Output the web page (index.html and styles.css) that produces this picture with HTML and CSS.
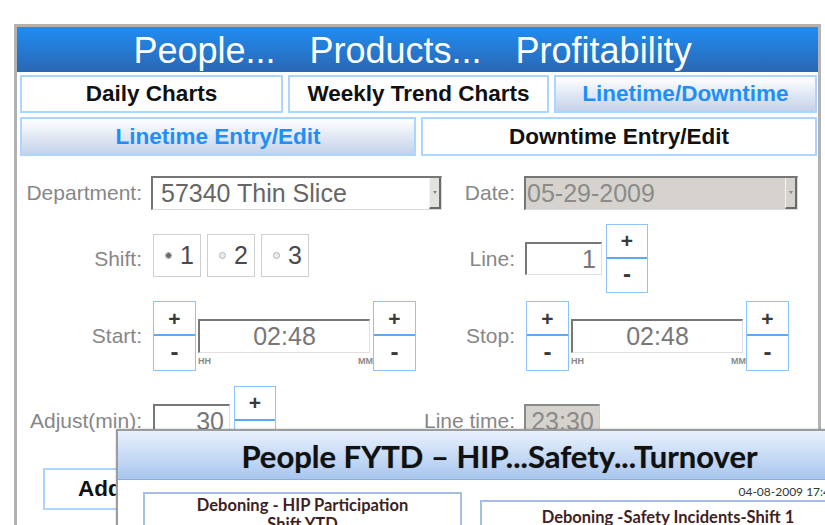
FILE: index.html
```html
<!DOCTYPE html>
<html>
<head>
<meta charset="utf-8">
<title>Linetime Entry/Edit</title>
<link rel="stylesheet" href="styles.css">
</head>
<body>
<div class="frame">
  <div class="header"><span>People...</span><span>Products...</span><span>Profitability</span></div>
  <div class="tabs tabs3">
    <div class="tab">Daily Charts</div>
    <div class="tab">Weekly Trend Charts</div>
    <div class="tab active">Linetime/Downtime</div>
  </div>
  <div class="tabs tabs2">
    <div class="tab active">Linetime Entry/Edit</div>
    <div class="tab">Downtime Entry/Edit</div>
  </div>

  <div class="row row-dept">
    <div class="lbl">Department:</div>
    <div class="select"><span class="val">57340 Thin Slice</span><span class="drop"><span class="arrow"></span></span></div>
    <div class="lbl">Date:</div>
    <div class="select date disabled"><span class="val">05-29-2009</span><span class="drop"><span class="arrow"></span></span></div>
  </div>

  <div class="row row-shift">
    <div class="lbl">Shift:</div>
    <div class="shifts">
      <div class="shiftbox"><span class="radio on"></span><span>1</span></div>
      <div class="shiftbox"><span class="radio"></span><span>2</span></div>
      <div class="shiftbox"><span class="radio"></span><span>3</span></div>
    </div>
    <div class="lbl">Line:</div>
    <div class="spin">
      <div class="num">1</div>
      <div class="pm"><div class="plus">+</div><div class="minus">-</div></div>
    </div>
  </div>

  <div class="row row-time">
    <div class="lbl">Start:</div>
    <div class="timegrp">
      <div class="pm tall"><div class="plus">+</div><div class="minus">-</div></div>
      <div class="tmid">
        <div class="tinput">02:48</div>
        <div class="tlabels"><span>HH</span><span>MM</span></div>
      </div>
      <div class="pm tall"><div class="plus">+</div><div class="minus">-</div></div>
    </div>
    <div class="lbl">Stop:</div>
    <div class="timegrp stop">
      <div class="pm tall"><div class="plus">+</div><div class="minus">-</div></div>
      <div class="tmid">
        <div class="tinput">02:48</div>
        <div class="tlabels"><span>HH</span><span>MM</span></div>
      </div>
      <div class="pm tall"><div class="plus">+</div><div class="minus">-</div></div>
    </div>
  </div>

  <div class="row row-adjust">
    <div class="lbl">Adjust(min):</div>
    <div class="spin adj">
      <div class="num">30</div>
      <div class="pm"><div class="plus">+</div><div class="minus">-</div></div>
    </div>
    <div class="lbl">Line time:</div>
    <div class="num gray">23:30</div>
  </div>

  <div class="actions">
    <div class="addbtn">Add Line</div>
  </div>
</div>

<div class="overlay">
  <div class="ov-title">People FYTD – HIP...Safety...Turnover</div>
  <div class="ov-body">
    <div class="chart c1">
      <div class="ctitle">Deboning - HIP Participation</div>
      <div class="ctitle">Shift YTD</div>
    </div>
    <div class="col2">
      <div class="stamp">04-08-2009 17:45</div>
      <div class="chart c2">
        <div class="ctitle">Deboning -Safety Incidents-Shift 1</div>
      </div>
    </div>
  </div>
</div>
</body>
</html>
```

FILE: styles.css
```css
* { box-sizing: border-box; }
html, body { margin: 0; padding: 0; }
body {
  width: 825px;
  height: 525px;
  overflow: hidden;
  background: #fff;
  font-family: "Liberation Sans", Arial, sans-serif;
  position: relative;
}

.frame {
  margin: 24px 0 0 14px;
  width: 807px;
  height: 520px;
  border: 3px solid #b2b2b2;
  border-bottom: none;
}

.header {
  height: 45px;
  background: linear-gradient(#1f8df2, #2a67b4);
  color: #fff;
  font-size: 36px;
  line-height: 1;
  display: flex;
  justify-content: center;
  align-items: center;
  gap: 34px;
  padding-right: 10px;
  padding-top: 2px;
}

.tabs { display: grid; column-gap: 5px; padding: 0 1px 0 3px; }
.tabs3 { grid-template-columns: 263px 261px 263px; margin-top: 3px; }
.tabs2 { grid-template-columns: 396px 396px; margin-top: 4px; }
.tab {
  height: 38px;
  border: 2px solid #acd5ff;
  background: #fff;
  color: #111;
  font-weight: bold;
  font-size: 22.5px;
  display: flex;
  align-items: center;
  justify-content: center;
}
.tabs2 .tab { height: 39px; }
.tab.active {
  color: #1e8ff7;
  background: linear-gradient(#ffffff, #c4d2ea);
}

.row {
  display: grid;
  grid-template-columns: 134px 290px 83px 1fr;
  align-items: center;
}
.lbl {
  display: flex;
  justify-content: flex-end;
  white-space: nowrap;
  padding-right: 9px;
  font-size: 21px;
  color: #878787;
}

.row-dept { margin-top: 20px; height: 34px; }
.select {
  width: 291px;
  height: 34px;
  display: flex;
  border-top: 2px solid #767676;
  border-left: 2px solid #767676;
  border-bottom: 1px solid #dcdcdc;
  border-right: 1px solid #dcdcdc;
  background: #fff;
}
.select .val {
  flex: 1;
  font-size: 25px;
  line-height: 30px;
  color: #666;
  padding-left: 8px;
}
.select .drop {
  width: 12px;
  background: #e4e2dd;
  border-right: 2px solid #6a6a6a;
  border-bottom: 2px solid #6a6a6a;
  border-left: 1px solid #f4f4f4;
  display: flex;
  align-items: center;
  justify-content: center;
}
.arrow {
  width: 0;
  height: 0;
  border-left: 2px solid transparent;
  border-right: 2px solid transparent;
  border-top: 3px solid #888;
}
.select.date { width: 274px; background: #d6d3ce; }
.select.date .val { color: #8b8b8b; padding-left: 1px; }
.select.date .drop { background: #d6d3ce; }

.row-shift { margin-top: 14px; height: 69px; }
.shifts { display: flex; gap: 6px; padding-left: 2px; align-self: start; margin-top: 10px; }
.shiftbox {
  width: 48px;
  height: 43px;
  border: 1px solid #cfcfcf;
  display: flex;
  align-items: center;
  gap: 8px;
  padding-left: 11px;
  font-size: 25px;
  color: #4a4a4a;
}
.radio {
  width: 7px;
  height: 7px;
  border-radius: 50%;
  border: 1px solid #b5b5b5;
  background: #ececec;
}
.radio.on { background: radial-gradient(circle, #666 0 2px, #ddd 2.5px); border-color: #999; }

.spin { display: flex; align-items: center; gap: 4px; padding-left: 1px; }
.num {
  width: 77px;
  height: 33px;
  border-top: 2px solid #777;
  border-left: 2px solid #777;
  border-bottom: 1px solid #e0e0e0;
  border-right: 1px solid #e0e0e0;
  text-align: right;
  padding-right: 5px;
  font-size: 25px;
  line-height: 30px;
  color: #777;
}
.num.gray { width: 76px; background: #d6d3ce; border-color: #8a8a8a #ccc #ccc #8a8a8a; color: #8b8b8b; text-align: center; padding: 0; }

.pm {
  width: 42px;
  height: 69px;
  border: 1px solid #8cc3fb;
  display: flex;
  flex-direction: column;
  background: #fff;
}
.pm .plus, .pm .minus {
  flex: 1;
  display: flex;
  align-items: center;
  justify-content: center;
  font-size: 21px;
  font-weight: bold;
  color: #3a3a3a;
}
.pm .plus { border-bottom: 2px solid #5fa9f3; padding-top: 1px; }
.pm .minus { font-size: 24px; padding-bottom: 3px; }
.pm.tall { width: 43px; height: 70px; }

.row-time { margin-top: 7px; height: 72px; }
.timegrp { display: flex; padding-left: 2px; }
.tmid { width: 177px; padding-left: 2px; padding-right: 3px; padding-top: 18px; }
.tinput {
  width: 172px;
  height: 34px;
  border-top: 2px solid #777;
  border-left: 2px solid #777;
  border-bottom: 1px solid #e0e0e0;
  border-right: 1px solid #e0e0e0;
  text-align: center;
  font-size: 25px;
  line-height: 31px;
  color: #777;
}
.tlabels {
  display: flex;
  justify-content: space-between;
  font-size: 9px;
  font-weight: bold;
  color: #8a8a8a;
  margin-top: 3px;
  margin-right: -3px;
}

.row-adjust { margin-top: 14px; height: 69px; }
.spin.adj { padding-left: 2px; }

.actions { margin-top: 13px; padding-left: 26px; }
.addbtn {
  width: 170px;
  height: 42px;
  border: 2px solid #acd5ff;
  font-size: 22.5px;
  font-weight: bold;
  color: #111;
  display: flex;
  align-items: center;
  padding-left: 33px;
}

.overlay {
  position: absolute;
  left: 116px;
  top: 429px;
  width: 767px;
  height: 130px;
  border: 2px solid #9c9c9c;
  background: #fff;
  box-shadow: 0 0 2px rgba(0,0,0,0.25);
}
.ov-title {
  height: 49px;
  background: linear-gradient(#e8f1fd, #a9c6ee);
  border-bottom: 1px solid #8cadd6;
  font-family: Lato, "Open Sans", sans-serif;
  font-weight: bold;
  font-size: 31px;
  color: #111;
  text-shadow: 0 0 1px rgba(0,0,0,0.35);
  display: flex;
  align-items: center;
  justify-content: center;
  padding-top: 2px;
}
.ov-body {
  display: grid;
  grid-template-columns: 319px 376px;
  column-gap: 18px;
  padding-left: 25px;
  font-family: Lato, "Open Sans", sans-serif;
}
.chart {
  border: 2px solid #a6bedf;
  background: #fff;
  height: 60px;
  text-align: center;
}
.c1 { margin-top: 12px; padding-top: 2px; }
.c2 { margin-top: 1px; padding-top: 6px; }
.ctitle {
  font-size: 16.5px;
  font-weight: bold;
  color: #3f1f1f;
  line-height: 19px;
  white-space: nowrap;
}
.stamp {
  text-align: right;
  padding-right: 19px;
  font-size: 12px;
  line-height: 14px;
  margin-top: 5px;
  color: #333;
}
```
